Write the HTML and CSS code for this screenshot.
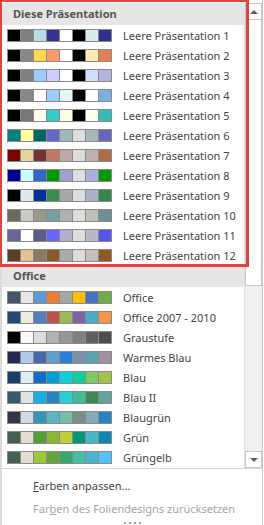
FILE: index.html
```html
<!DOCTYPE html>
<html lang="de">
<head>
  <meta charset="UTF-8" />
  <meta name="viewport" content="width=device-width, initial-scale=1.0"/>
  <title>Farben</title>
  <link rel="stylesheet" href="styles.css">
</head>
<body>
  <div class="panel">
    <div class="list-wrap">
      <div class="list">
        <div class="group-title">Diese Präsentation</div>
        <div id="customThemes"></div>
        <div class="group-title">Office</div>
        <div id="officeThemes"></div>
      </div>
      <div class="scrollbar">
        <div class="sb-btn"><span class="arrow-up"></span></div>
        <div class="sb-thumb"></div>
        <div class="sb-track"></div>
        <div class="sb-btn"><span class="arrow-down"></span></div>
      </div>
      <!-- highlight box drawn over the first group -->
      <div class="highlight"></div>
    </div>

    <div class="menu">
      <div class="menu-item"><u>F</u>arben anpassen...</div>
      <div class="menu-item disabled">Far<u>b</u>en des Foliendesigns zurücksetzen</div>
      <div class="grip"><i></i><i></i><i></i><i></i></div>
    </div>
  </div>

  <script>
    const custom = [
      ["#000000","#808080","#b3dfe0","#333399","#ffffff","#000000","#d6eeee","#2e3192"],
      ["#000000","#888888","#fcd94b","#ff9966","#ffffff","#000000","#fde9b1","#e0804f"],
      ["#000000","#808080","#99ccff","#ccccff","#ffffff","#000000","#cce0ff","#b4b4e0"],
      ["#000000","#888888","#ffffff","#99ccff","#e6f7f2","#000000","#ffffff","#7fafe0"],
      ["#000000","#777777","#fffff0","#33cccc","#ffffe0","#000000","#fffff0","#33bbbb"],
      ["#008080","#ffff99","#006666","#6666cc","#a0b8b8","#dddddd","#a8b8b8","#6666bb"],
      ["#800000","#e4d496","#773333","#c07860","#c0a8a8","#dddddd","#c0b0b0","#b06a48"],
      ["#000099","#c6ffff","#3366cc","#009900","#a0a0cc","#dddddd","#aab0dd","#009900"],
      ["#000000","#e0e8f0","#003399","#3a8c4a","#a8a8a8","#dddddd","#aab0cc","#338844"],
      ["#6b6b5b","#cccac4","#999988","#75a0a8","#b0b0b0","#dddddd","#c0c0b8","#6b9098"],
      ["#666699","#ffffff","#5c5c8a","#6666ff","#b0b0cc","#dddddd","#b8b8c8","#5555ee"],
      ["#5c4020","#e8c089","#8c7866","#8c5a28","#aaaaaa","#dddddd","#c8c0b8","#8c5a26"]
    ];

    const office = [
      ["Office", ["#44546a","#e7e6e6","#5b9bd5","#ed7d31","#a5a5a5","#ffc000","#4472c4","#70ad47"]],
      ["Office 2007 - 2010", ["#1f497d","#eeece1","#4f81bd","#c0504d","#9bbb59","#8064a2","#4bacc6","#f79646"]],
      ["Graustufe", ["#000000","#f8f8f8","#dddddd","#b2b2b2","#969696","#808080","#5f5f5f","#4d4d4d"]],
      ["Warmes Blau", ["#242852","#acccea","#4a66ac","#629dd1","#297fd5","#7f8fa9","#5aa2ae","#9d90a0"]],
      ["Blau", ["#17406d","#dbeff9","#0f6fc6","#009dd9","#0bd0d9","#10cf9b","#7cca62","#a5c249"]],
      ["Blau II", ["#335b74","#dfe3e5","#1cade4","#2683c6","#27ced7","#42ba97","#3e8853","#62a39f"]],
      ["Blaugrün", ["#373545","#cedbe6","#3494ba","#58b6c0","#75bda7","#7a8c8e","#84acb6","#2683c6"]],
      ["Grün", ["#455f51","#e3ded1","#549e39","#8ab833","#c0cf3a","#029676","#4ab5c4","#0989b1"]],
      ["Grüngelb", ["#455f51","#e3ded1","#99cb38","#63a537","#37a76f","#44c1a3","#4eb3cf","#51c3f9"]]
    ];

    function makeRow(name, colors) {
      const row = document.createElement("div");
      row.className = "theme-row";
      const strip = document.createElement("div");
      strip.className = "swatches";
      colors.forEach(c => {
        const s = document.createElement("span");
        s.style.background = c;
        strip.appendChild(s);
      });
      const label = document.createElement("span");
      label.className = "theme-name";
      label.textContent = name;
      row.appendChild(strip);
      row.appendChild(label);
      return row;
    }

    const customBox = document.getElementById("customThemes");
    custom.forEach((colors, i) => {
      customBox.appendChild(makeRow("Leere Präsentation " + (i + 1), colors));
    });

    const officeBox = document.getElementById("officeThemes");
    office.forEach(([name, colors]) => officeBox.appendChild(makeRow(name, colors)));
  </script>
</body>
</html>
```

FILE: styles.css
```css
body {
  margin: 0;
  background: #ffffff;
  font-family: "Segoe UI", "Noto Sans", "Open Sans", sans-serif;
  font-size: 11px;
  color: #444;
}

.panel {
  width: 260px;
  height: 525px;
  border-left: 2px solid #dcdcdc;
  border-right: 1px solid #c8c8c8;
  display: flex;
  flex-direction: column;
}

.list-wrap {
  position: relative;
  display: flex;
  height: 465px;
  padding-top: 3px;
  border-bottom: 1px solid #d6d6d6;
}

.list {
  width: 242px;
}

.group-title {
  height: 22px;
  line-height: 21px;
  padding-left: 11px;
  background: #e6e6e6;
  font-weight: bold;
  color: #555;
}

.theme-row {
  height: 20px;
  display: flex;
  align-items: center;
}

.swatches {
  display: flex;
  gap: 1px;
  padding: 1px;
  margin-left: 5px;
  background: #8a8a8a;
}

.swatches span {
  width: 12px;
  height: 11px;
}

.theme-name {
  margin-left: 11px;
  white-space: nowrap;
}

/* scrollbar */
.scrollbar {
  width: 17px;
  display: flex;
  flex-direction: column;
  background: #f0f0f0;
  border-left: 1px solid #e2e2e2;
}

.sb-btn {
  height: 15px;
  border: 1px solid #c8c8c8;
  background: #fff;
  display: flex;
  align-items: center;
  justify-content: center;
}

.arrow-up,
.arrow-down {
  width: 0;
  height: 0;
  border-left: 4px solid transparent;
  border-right: 4px solid transparent;
}

.arrow-up {
  border-bottom: 4px solid #606060;
}

.arrow-down {
  border-top: 4px solid #606060;
}

.sb-thumb {
  height: 265px;
  border: 1px solid #c8c8c8;
  border-top: none;
  background: #fff;
}

.sb-track {
  flex: 1;
}

.highlight {
  position: absolute;
  left: -2px;
  top: 0;
  width: 244px;
  height: 262px;
  border: 3px solid #e2443d;
  border-left-width: 2px;
  border-top-width: 2px;
}

/* bottom menu */
.menu {
  flex: 1;
  display: flex;
  flex-direction: column;
  padding-left: 31px;
  padding-top: 5px;
}

.menu-item {
  height: 23px;
  line-height: 23px;
  white-space: nowrap;
}

.menu-item.disabled {
  color: #a6a6a6;
}

.grip {
  display: flex;
  gap: 3px;
  margin-left: 91px;
  margin-top: 2px;
}

.grip i {
  width: 2px;
  height: 2px;
  background: #a0a0a0;
}
```
